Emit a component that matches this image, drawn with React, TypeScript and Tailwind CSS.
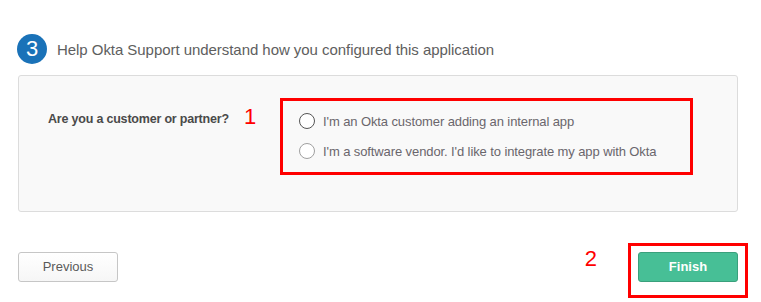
import React from "react";

export default function App() {
  return (
    <div className="w-[761px] h-[302px] bg-white font-['Liberation_Sans',Arial,sans-serif] overflow-hidden">
      {/* Header */}
      <div className="flex items-center pl-[17px] pt-[34px] h-[64px]">
        <div className="w-[30px] h-[30px] rounded-full bg-[#1a72b8] flex items-center justify-center text-white text-[22px] leading-none">
          3
        </div>
        <div className="ml-[10px] text-[15px] text-[#5e5e5e] leading-none tracking-[-0.05px]">
          Help Okta Support understand how you configured this application
        </div>
      </div>

      {/* Panel */}
      <div className="mt-[11px] ml-[18px] w-[720px] h-[137px] bg-[#f9f9f9] border border-[#dcdcdc] rounded-[3px] flex items-start pt-[22px]">
        <div className="ml-[29px] w-[196px] mt-[15px] text-[12.5px] font-bold text-[#4a4a4a] leading-none tracking-[-0.2px] whitespace-nowrap">
          Are you a customer or partner?
        </div>
        <div className="w-[36px] mt-[8px] text-[22px] text-[#ff0000] leading-none">1</div>
        <div className="w-[413px] h-[77px] border-[3px] border-[#ff0000] flex flex-col pl-[16px] pt-[10px] gap-[10px]">
          <label className="flex items-center h-[20px] gap-[8px]">
            <span className="w-[16px] h-[16px] rounded-full bg-white border-[1.5px] border-[#555]" />
            <span className="text-[13px] text-[#6a666c] leading-none tracking-[-0.1px]">I'm an Okta customer adding an internal app</span>
          </label>
          <label className="flex items-center h-[20px] gap-[8px]">
            <span className="w-[16px] h-[16px] rounded-full bg-white border border-[#a0a0a0]" />
            <span className="text-[13px] text-[#6a666c] leading-none tracking-[-0.1px]">I'm a software vendor. I'd like to integrate my app with Okta</span>
          </label>
        </div>
      </div>

      {/* Footer */}
      <div className="flex justify-between items-start mt-[31px] pl-[18px] pr-[13px]">
        <button className="mt-[9px] w-[100px] h-[30px] rounded-[3px] border border-[#c6c6c6] bg-gradient-to-b from-white to-[#f6f6f6] text-[13px] text-[#5a5a5a]">
          Previous
        </button>
        <div className="flex items-start">
          <div className="mt-[5px] mr-[31px] text-[22px] text-[#ff0000] leading-none">2</div>
          <div className="w-[120px] h-[55px] border-[3px] border-[#ff0000] pl-[7px] pt-[6px]">
            <button className="w-[100px] h-[30px] rounded-[3px] bg-[#47bf96] border border-[#3aa07c] text-white text-[13px] font-bold">
              Finish
            </button>
          </div>
        </div>
      </div>
    </div>
  );
}
